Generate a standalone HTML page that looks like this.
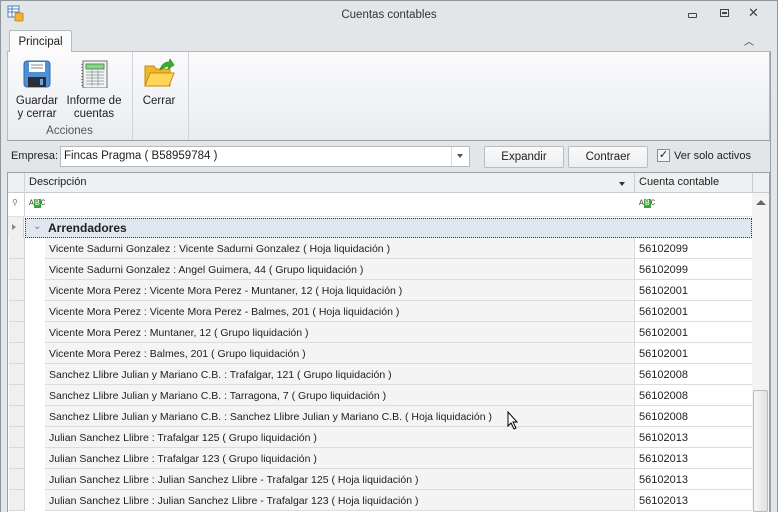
<!DOCTYPE html>
<html><head><meta charset="utf-8"><style>
*{margin:0;padding:0;box-sizing:border-box}
body{width:778px;height:512px;overflow:hidden;background:#e3e6e9;font-family:"Liberation Sans",sans-serif;font-size:11px;color:#1e1e1e;position:relative}
.a{position:absolute}
.row{position:absolute;left:9px;width:743px;height:21px;font-size:10.5px}
.row .ind{position:absolute;left:0;top:0;width:16px;height:21px;background:#f0f0f0;border-right:1px solid #d0d0d0;border-bottom:1px solid #d8d8d8}
.row .d{position:absolute;left:36px;top:0;width:590px;height:21px;background:#f4f4f4;border-bottom:1px solid #dcdcdc;border-right:1px solid #dcdcdc;padding:5px 0 0 4px;white-space:nowrap}
.row .c{position:absolute;left:626px;top:0;width:117px;height:21px;background:#fff;border-bottom:1px solid #dcdcdc;padding:5px 0 0 4px;font-size:11px}
.btn{position:absolute;height:22px;border:1px solid #b9bcc0;border-radius:2px;background:linear-gradient(#fafafa,#eceef0);text-align:center;padding-top:4px;font-size:11.5px}
.abc{font-size:8px;font-family:"Liberation Mono",monospace;color:#444;line-height:10px}
.abc b{background:#3aa63a;color:#fff;padding:0 1px;font-weight:normal}
</style></head><body>
<div class="a" style="left:0;top:0;width:778px;height:512px;border:1px solid #8f969c;border-bottom:none;background:#e3e6e9"></div>
<div class="a" style="left:7px;top:5px;width:18px;height:18px">
<svg width="18" height="18"><rect x="1" y="1" width="11" height="11" fill="#fff" stroke="#4a7fc1"/><path d="M1 4h11M1 7h11M5 1v11" stroke="#4a7fc1"/><rect x="8" y="8" width="8" height="8" rx="1" fill="#f2b33d" stroke="#c98a12"/></svg></div>
<div class="a" style="left:0;top:9px;width:778px;text-align:center;font-size:11.5px;color:#333">Cuentas contables</div>
<div class="a" style="left:688px;top:13px;width:9px;height:5px;border:1px solid #444;border-radius:1px"></div>
<div class="a" style="left:720px;top:9px;width:9px;height:8px;border:1px solid #444"></div>
<div class="a" style="left:722px;top:12px;width:5px;height:2px;border:1px solid #444"></div>
<div class="a" style="left:748px;top:5px;font-size:13px;color:#444">✕</div>
<div class="a" style="left:744px;top:33px;font-size:10px;color:#333">︿</div>
<div class="a" style="left:9px;top:30px;width:63px;height:22px;background:#fbfbfb;border:1px solid #b5babe;border-bottom:none;border-radius:2px 2px 0 0;text-align:center;padding-top:5px;font-size:11.5px;z-index:2">Principal</div>
<div class="a" style="left:7px;top:51px;width:763px;height:90px;background:linear-gradient(#fbfbfc,#e9ecef);border:1px solid #b5babe;border-bottom:1px solid #9aa0a6"></div>
<div class="a" style="left:132px;top:52px;width:1px;height:88px;background:#d0d4d8"></div>
<div class="a" style="left:188px;top:52px;width:1px;height:88px;background:#d0d4d8"></div>
<svg class="a" style="left:23px;top:60px" width="28" height="28"><rect x="1" y="1" width="26" height="26" rx="3" fill="#4f8fd6" stroke="#2f6aab"/><rect x="6" y="2" width="16" height="10" fill="#fff"/><path d="M8 5h12M8 8h12" stroke="#888"/><rect x="5" y="17" width="18" height="10" fill="#2b2f35"/><rect x="17" y="19" width="3" height="6" fill="#6aa3e0"/></svg>
<svg class="a" style="left:80px;top:60px" width="28" height="28"><rect x="3" y="1" width="24" height="27" fill="#f4f4f4" stroke="#707070"/><rect x="6" y="4" width="18" height="5" fill="#8fcf8f" stroke="#4a994a"/><path d="M6 12h18M6 15h18M6 18h18M6 21h18M6 24h18M12 10v16M18 10v16" stroke="#9aa"/><path d="M2 4v22" stroke="#555" stroke-dasharray="1 2"/></svg>
<svg class="a" style="left:143px;top:58px" width="32" height="32"><path d="M2 8h9l2 3h14v17H2z" fill="#f0b72a" stroke="#c58a0a"/><path d="M2 28l5-13h24l-5 13z" fill="#ffd65a" stroke="#c58a0a"/><path d="M17 12c1-5 5-8 9-8l1-3 4 6-6 4 1-3c-3 0-6 2-9 4z" fill="#3fae2a" stroke="#2a8a1a" stroke-width=".7"/></svg>
<div class="a" style="left:14px;top:95px;width:46px;text-align:center;line-height:13px;font-size:11.5px">Guardar<br>y cerrar</div>
<div class="a" style="left:64px;top:95px;width:60px;text-align:center;line-height:13px;font-size:11.5px">Informe de<br>cuentas</div>
<div class="a" style="left:140px;top:95px;width:38px;text-align:center;font-size:11.5px">Cerrar</div>
<div class="a" style="left:7px;top:125px;width:125px;text-align:center;color:#555;font-size:11.5px">Acciones</div>
<div class="a" style="left:11px;top:150px;font-size:11px">Empresa:</div>
<div class="a" style="left:60px;top:146px;width:410px;height:21px;background:#fff;border:1px solid #b5babe;padding:3px 0 0 3px;font-size:11.5px">Fincas Pragma ( B58959784 )</div>
<div class="a" style="left:451px;top:147px;width:1px;height:19px;background:#d8d8d8"></div>
<div class="a" style="left:457px;top:154px;border:3px solid transparent;border-top:4px solid #555"></div>
<div class="btn" style="left:484px;top:146px;width:80px">Expandir</div>
<div class="btn" style="left:568px;top:146px;width:80px">Contraer</div>
<div class="a" style="left:657px;top:149px;width:13px;height:13px;border:1px solid #8a8a8a;background:#f3f3f3;font-size:11px;line-height:11px;text-align:center">✓</div>
<div class="a" style="left:674px;top:150px;font-size:11px">Ver solo activos</div>
<div class="a" style="left:7px;top:172px;width:763px;height:340px;background:#fff;border:1px solid #9aa0a6;border-bottom:none"></div>
<div class="a" style="left:8px;top:173px;width:761px;height:20px;background:#eef0f2;border-bottom:1px solid #c8ccd0"></div>
<div class="a" style="left:24px;top:173px;width:1px;height:44px;background:#d0d4d8"></div>
<div class="a" style="left:634px;top:173px;width:1px;height:20px;background:#c8ccd0"></div>
<div class="a" style="left:752px;top:173px;width:1px;height:20px;background:#c8ccd0"></div>
<div class="a" style="left:29px;top:176px;font-size:11px">Descripción</div>
<div class="a" style="left:619px;top:182px;border:3px solid transparent;border-top:4px solid #333"></div>
<div class="a" style="left:639px;top:176px;font-size:11px">Cuenta contable</div>
<div class="a" style="left:12px;top:198px;font-size:8px;color:#777">⚲</div>
<div class="a abc" style="left:29px;top:199px">A<b>B</b>C</div>
<div class="a abc" style="left:639px;top:199px">A<b>B</b>C</div>
<div class="a" style="left:8px;top:216px;width:744px;height:1px;background:#e0e0e0"></div>
<div class="a" style="left:8px;top:217px;width:16px;height:21px;background:#f0f0f0;border-right:1px solid #d0d0d0"></div>
<div class="a" style="left:12px;top:224px;border:3px solid transparent;border-left:4px solid #888"></div>
<div class="a" style="left:25px;top:218px;width:727px;height:20px;background:#dfe7f1;border:1px dotted #333"></div>
<div class="a" style="left:33px;top:221px;font-size:10px;color:#777">⌄</div>
<div class="a" style="left:48px;top:221px;font-weight:bold;font-size:12px">Arrendadores</div>
<div class="a" style="left:752px;top:193px;width:17px;height:319px;background:#f3f3f3"></div>
<div class="a" style="left:756px;top:200px;border:5px solid transparent;border-bottom:5px solid #666;border-top:none"></div>
<div class="a" style="left:753px;top:390px;width:15px;height:122px;background:linear-gradient(90deg,#f6f6f6,#e2e2e2);border:1px solid #bbb;border-radius:2px"></div>
<div class="a" style="left:770px;top:51px;width:1px;height:461px;background:#9aa0a6"></div>

<div class="row" style="top:238px"><div class="ind"></div><div class="d">Vicente Sadurni Gonzalez : Vicente Sadurni Gonzalez ( Hoja liquidación )</div><div class="c">56102099</div></div>
<div class="row" style="top:259px"><div class="ind"></div><div class="d">Vicente Sadurni Gonzalez : Angel Guimera, 44 ( Grupo liquidación )</div><div class="c">56102099</div></div>
<div class="row" style="top:280px"><div class="ind"></div><div class="d">Vicente Mora Perez : Vicente Mora Perez - Muntaner, 12 ( Hoja liquidación )</div><div class="c">56102001</div></div>
<div class="row" style="top:301px"><div class="ind"></div><div class="d">Vicente Mora Perez : Vicente Mora Perez - Balmes, 201 ( Hoja liquidación )</div><div class="c">56102001</div></div>
<div class="row" style="top:322px"><div class="ind"></div><div class="d">Vicente Mora Perez : Muntaner, 12 ( Grupo liquidación )</div><div class="c">56102001</div></div>
<div class="row" style="top:343px"><div class="ind"></div><div class="d">Vicente Mora Perez : Balmes, 201 ( Grupo liquidación )</div><div class="c">56102001</div></div>
<div class="row" style="top:364px"><div class="ind"></div><div class="d">Sanchez Llibre Julian y Mariano C.B. : Trafalgar, 121 ( Grupo liquidación )</div><div class="c">56102008</div></div>
<div class="row" style="top:385px"><div class="ind"></div><div class="d">Sanchez Llibre Julian y Mariano C.B. : Tarragona, 7 ( Grupo liquidación )</div><div class="c">56102008</div></div>
<div class="row" style="top:406px"><div class="ind"></div><div class="d">Sanchez Llibre Julian y Mariano C.B. : Sanchez Llibre Julian y Mariano C.B. ( Hoja liquidación )</div><div class="c">56102008</div></div>
<div class="row" style="top:427px"><div class="ind"></div><div class="d">Julian Sanchez Llibre : Trafalgar 125 ( Grupo liquidación )</div><div class="c">56102013</div></div>
<div class="row" style="top:448px"><div class="ind"></div><div class="d">Julian Sanchez Llibre : Trafalgar 123 ( Grupo liquidación )</div><div class="c">56102013</div></div>
<div class="row" style="top:469px"><div class="ind"></div><div class="d">Julian Sanchez Llibre : Julian Sanchez Llibre - Trafalgar 125 ( Hoja liquidación )</div><div class="c">56102013</div></div>
<div class="row" style="top:490px"><div class="ind"></div><div class="d">Julian Sanchez Llibre : Julian Sanchez Llibre - Trafalgar 123 ( Hoja liquidación )</div><div class="c">56102013</div></div>
<svg class="a" style="left:507px;top:411px" width="12" height="19"><path d="M1 1v14l3-3 3 6 2-1-3-6h4z" fill="#fff" stroke="#000"/></svg>
</body></html>
